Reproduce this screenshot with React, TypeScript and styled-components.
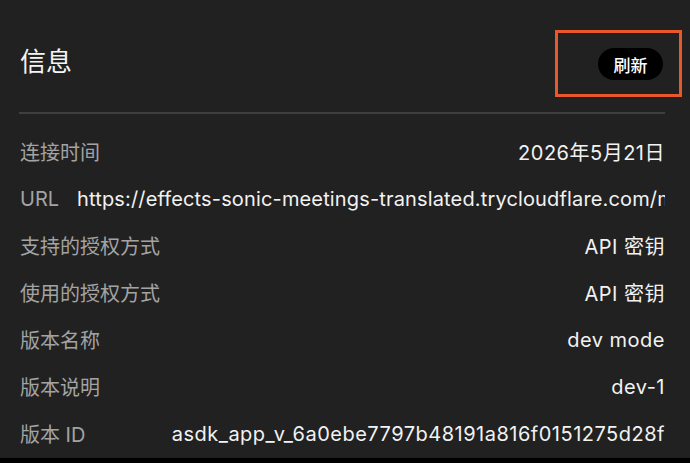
import styled, {createGlobalStyle} from "styled-components";

const GlobalStyle = createGlobalStyle`
  html, body {
    margin: 0;
    padding: 0;
    background: #000;
  }
  body {
    font-family: Inter, "Noto Sans CJK SC", sans-serif;
    -webkit-font-smoothing: antialiased;
  }
`;

const rows: {label: string; value: string; link?: boolean}[] = [
  {label: "连接时间", value: "2026年5月21日"},
  {
    label: "URL",
    value: "https://effects-sonic-meetings-translated.trycloudflare.com/mcp",
    link: true,
  },
  {label: "支持的授权方式", value: "API 密钥"},
  {label: "使用的授权方式", value: "API 密钥"},
  {label: "版本名称", value: "dev mode"},
  {label: "版本说明", value: "dev-1"},
  {label: "版本 ID", value: "asdk_app_v_6a0ebe7797b48191a816f0151275d28f"},
];

const App = () => {
  return (
    <Page>
      <GlobalStyle />
      <Panel>
        <Header>
          <Title>信息</Title>
          <ButtonWrap>
            <RefreshButton>刷新</RefreshButton>
            <Highlight />
          </ButtonWrap>
        </Header>
        <List>
          {rows.map((row) => (
            <Row key={row.label}>
              <Label>{row.label}</Label>
              <Value $link={row.link}>{row.value}</Value>
            </Row>
          ))}
        </List>
      </Panel>
    </Page>
  );
};

const Page = styled.div`
  width: 690px;
  height: 463px;
  background: #000;
  overflow: hidden;
`;

const Panel = styled.div`
  height: 458px;
  background: #212121;
  padding: 0 25px 0 19px;
  box-sizing: border-box;
  overflow: hidden;
`;

const Header = styled.div`
  display: flex;
  align-items: center;
  justify-content: space-between;
  padding: 48px 2px 32px 1px;
  border-bottom: solid 2px #3f3f3f;
`;

const Title = styled.h1`
  margin: 0;
  font-size: 26px;
  font-weight: 400;
  color: #f4f4f4;
  line-height: 32px;
  margin-top: -4px;
`;

const ButtonWrap = styled.div`
  position: relative;
`;

const RefreshButton = styled.button`
  display: flex;
  align-items: center;
  justify-content: center;
  height: 32px;
  width: 65px;
  padding: 0;
  border: none;
  border-radius: 16px;
  background: #000;
  color: #fff;
  font-family: inherit;
  font-size: 17px;
  font-weight: 500;
`;

const Highlight = styled.div`
  position: absolute;
  left: -43px;
  top: -18px;
  right: -19px;
  bottom: -17px;
  border: solid 3px #e9582d;
  pointer-events: none;
`;

const List = styled.div`
  padding-top: 14px;
`;

const Row = styled.div`
  display: flex;
  align-items: center;
  gap: 18px;
  height: 47px;
  font-size: 20px;
  white-space: nowrap;
`;

const Label = styled.div`
  flex: none;
  color: #a3a3a3;
  padding-left: 1px;
`;

const Value = styled.div<{$link?: boolean}>`
  flex: 1;
  min-width: 0;
  overflow: hidden;
  text-align: right;
  color: #f2f2f2;
  letter-spacing: ${({$link}) => ($link ? "0.15px" : "0.5px")};
`;

export default App;
